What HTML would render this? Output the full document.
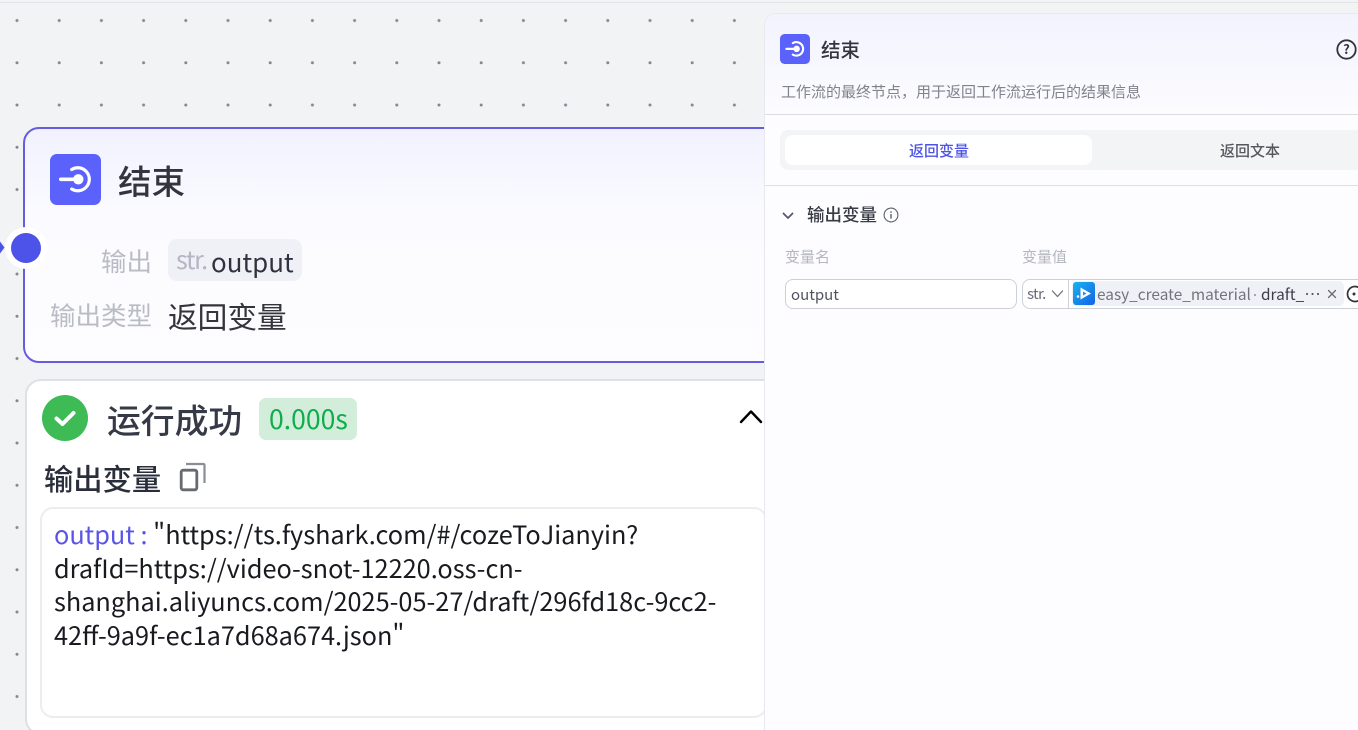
<!DOCTYPE html>
<html lang="zh">
<head>
<meta charset="utf-8">
<style>
html,body{margin:0;padding:0;width:1358px;height:730px;overflow:hidden;background:#f2f3f5;}
body{font-family:"Noto Sans CJK SC","Liberation Sans",sans-serif;position:relative;color:#30333d;}
.a{position:absolute;white-space:nowrap;}
#topline{left:0;top:2px;width:1358px;height:1px;background:#e3e4e8;}
#node{left:23px;top:127px;width:760px;height:232px;border:2px solid #665ce0;border-radius:16px;background:linear-gradient(180deg,#f1f2fe 0,#fbfbff 90px,#fdfdff 100%);}
#result{left:25px;top:379px;width:760px;height:352px;border:2px solid #dfe0e5;border-radius:16px;background:#fff;}
#box{left:40px;top:507px;width:723px;height:207px;border:2px solid #ecedf0;border-radius:13px;background:#fff;}
#panel{left:764px;top:13px;width:620px;height:730px;border:1px solid #e8e9ee;border-radius:12px 0 0 0;background:#fdfdff;box-sizing:border-box;}
#phead{left:765px;top:14px;width:593px;height:100px;background:linear-gradient(180deg,#f2f3fd 0,#fcfcff 100%);border-radius:12px 0 0 0;border-bottom:1px solid #dcdde1;}
</style>
</head>
<body>
<div class="a" id="topline"></div>
<svg class="a" style="left:0;top:0" width="765" height="730"><defs><pattern id="dp" x="-4.100" y="-0.600" width="42.200" height="42.250" patternUnits="userSpaceOnUse"><circle cx="21.100" cy="21.100" r="1.500" fill="#85878f"/></pattern></defs><rect width="765" height="730" fill="url(#dp)"/></svg>

<div class="a" id="node"></div>
<svg class="a" style="left:50px;top:154px" width="51" height="51" viewBox="0 0 51 51"><rect width="51" height="51" rx="7" fill="#5a62fb"/><path d="M21.700 15.500A11.500 11.500 0 1 1 21.700 35" fill="none" stroke="#fff" stroke-width="3.200" stroke-linecap="round"/><rect x="9" y="23.500" width="17" height="3.600" rx="1.800" fill="#fff"/><circle cx="28.300" cy="25.300" r="5.200" fill="#fff"/></svg>
<div class="a" style="left:118px;top:157px;font-size:33.500px;line-height:46px;font-weight:500;color:#33343c;">结束</div>
<div class="a" style="left:101px;top:243px;font-size:25.500px;line-height:36px;color:#b9bbc5;">输出</div>
<div class="a" style="left:168px;top:239px;width:134px;height:42px;border-radius:9px;background:#f0f1f6;"></div>
<div class="a" style="left:176px;top:241px;font-size:25px;line-height:36px;color:#b3b6c4;letter-spacing:-1.200px;">str.</div>
<div class="a" style="left:211px;top:243px;font-size:25.900px;line-height:38px;color:#30333f;">output</div>
<div class="a" style="left:50px;top:297px;font-size:25.500px;line-height:36px;color:#b9bbc5;">输出类型</div>
<div class="a" style="left:168px;top:296px;font-size:29.700px;line-height:40px;color:#33343c;">返回变量</div>
<div class="a" style="left:5px;top:227px;width:42px;height:42px;border-radius:50%;background:#fff;"></div>
<div class="a" style="left:11px;top:233px;width:30px;height:30px;border-radius:50%;background:#4d53e8;"></div>
<svg class="a" style="left:0;top:240px" width="5" height="15"><path d="M0 1.500 4.500 7.500 0 13.500Z" fill="#4d53e8"/></svg>

<div class="a" id="result"></div>
<svg class="a" style="left:42px;top:395px" width="46" height="46" viewBox="0 0 46 46"><circle cx="23" cy="23" r="23" fill="#3ebb55"/><path d="M14.500 23.500l6 5.500L31.500 18" fill="none" stroke="#fff" stroke-width="4" stroke-linecap="round" stroke-linejoin="round"/></svg>
<div class="a" style="left:107px;top:396px;font-size:33.800px;line-height:46px;font-weight:500;color:#363a47;">运行成功</div>
<div class="a" style="left:259px;top:398px;width:98px;height:42px;border-radius:7px;background:#d2eedb;"></div>
<div class="a" style="left:269px;top:400px;font-size:26.600px;line-height:36px;color:#10ad4c;">0.000s</div>
<svg class="a" style="left:738px;top:408px" width="26" height="16" viewBox="0 0 26 16"><path d="M3 14 13 3.500 23 14" fill="none" stroke="#000" stroke-width="2.400" stroke-linecap="round" stroke-linejoin="round"/></svg>
<div class="a" style="left:44px;top:458px;font-size:29.300px;line-height:40px;font-weight:500;color:#2a2e3b;">输出变量</div>
<svg class="a" style="left:179px;top:462px" width="27" height="30" viewBox="0 0 27 30"><rect x="2.200" y="8.200" width="15.600" height="19.600" rx="2" fill="none" stroke="#676a70" stroke-width="2.800"/><path d="M7 2h17.500a1 1 0 0 1 1 1v18" fill="none" stroke="#8b8d92" stroke-width="2.200"/></svg>
<div class="a" id="box"></div>
<div class="a" style="left:54px;top:518px;font-size:25.300px;line-height:33.700px;color:#181a20;white-space:pre;"><span style="color:#5a55e6">output : </span>"https://ts.fyshark.com/#/cozeToJianyin?
drafId=https://video-snot-12220.oss-cn-
shanghai.aliyuncs.com/2025-05-27/draft/296fd18c-9cc2-
42ff-9a9f-ec1a7d68a674.json"</div>

<div class="a" id="panel"></div>
<div class="a" id="phead"></div>
<svg class="a" style="left:780px;top:34px" width="30" height="30" viewBox="0 0 51 51"><rect width="51" height="51" rx="8" fill="#5a62fb"/><path d="M21.700 15.500A11.500 11.500 0 1 1 21.700 35" fill="none" stroke="#fff" stroke-width="3.600" stroke-linecap="round"/><rect x="9" y="23.300" width="17" height="4" rx="2" fill="#fff"/><circle cx="28.300" cy="25.300" r="5.500" fill="#fff"/></svg>
<div class="a" style="left:821px;top:35px;font-size:19.500px;line-height:28px;font-weight:500;color:#33343c;">结束</div>
<svg class="a" style="left:1336px;top:39px" width="21" height="21" viewBox="0 0 21 21"><circle cx="10.500" cy="10.500" r="9.200" fill="none" stroke="#30333c" stroke-width="1.800"/><text x="10.500" y="15" font-size="13" font-weight="700" text-anchor="middle" fill="#30333c" font-family="Noto Sans CJK SC,sans-serif">?</text></svg>
<div class="a" style="left:781px;top:82px;font-size:15px;line-height:20px;color:#80838c;">工作流的最终节点，用于返回工作流运行后的结果信息</div>

<div class="a" style="left:780px;top:130px;width:578px;height:40px;border-radius:8px 0 0 8px;background:#f3f4f6;"></div>
<div class="a" style="left:785px;top:135px;width:307px;height:30px;border-radius:8px;background:#fff;"></div>
<div class="a" style="left:909px;top:141px;font-size:15px;line-height:20px;font-weight:500;color:#4d53e8;">返回变量</div>
<div class="a" style="left:1220px;top:141px;font-size:15px;line-height:20px;font-weight:500;color:#55575e;">返回文本</div>
<div class="a" style="left:765px;top:185px;width:593px;height:1px;background:#dfe0e4;"></div>

<svg class="a" style="left:781px;top:210px" width="14" height="12" viewBox="0 0 14 12"><path d="M2.500 3.500 7 8 11.500 3.500" fill="none" stroke="#555a6a" stroke-width="1.800" stroke-linecap="round" stroke-linejoin="round"/></svg>
<div class="a" style="left:807px;top:204px;font-size:17.500px;line-height:22px;font-weight:500;color:#383b45;">输出变量</div>
<svg class="a" style="left:883px;top:207px" width="16" height="16" viewBox="0 0 16 16"><circle cx="8" cy="8" r="6.900" fill="none" stroke="#5c5f69" stroke-width="1.100"/><rect x="7.300" y="7" width="1.400" height="4.600" fill="#5c5f69"/><rect x="7.300" y="4.300" width="1.400" height="1.500" fill="#5c5f69"/></svg>
<div class="a" style="left:785px;top:247px;font-size:15px;line-height:20px;color:#b5b7bf;">变量名</div>
<div class="a" style="left:1022px;top:247px;font-size:15px;line-height:20px;color:#b5b7bf;">变量值</div>

<div class="a" style="left:785px;top:279px;width:232px;height:30px;box-sizing:border-box;border:1px solid #ced0d8;border-radius:8px;background:#fff;"></div>
<div class="a" style="left:791px;top:284px;font-size:15px;line-height:21px;color:#50535e;">output</div>
<div class="a" style="left:1022px;top:279px;width:360px;height:30px;box-sizing:border-box;border:1px solid #ced0d8;border-radius:8px;background:#fff;"></div>
<div class="a" style="left:1068px;top:280px;width:1px;height:28px;background:#ced0d8;"></div>
<div class="a" style="left:1027px;top:283px;font-size:15px;line-height:21px;color:#6c6f7b;letter-spacing:-.700px;">str.</div>
<svg class="a" style="left:1051px;top:289px" width="13" height="10" viewBox="0 0 13 10"><path d="M1.500 2 6.500 7.500 11.500 2" fill="none" stroke="#6f727c" stroke-width="1.300" stroke-linecap="round" stroke-linejoin="round"/></svg>
<div class="a" style="left:1072px;top:281px;width:272px;height:25px;border-radius:5px;background:#f0f1f7;"></div>
<svg class="a" style="left:1073px;top:282px" width="22" height="23" viewBox="0 0 22 23"><defs><linearGradient id="g" x1="0" y1="0" x2="1" y2="1"><stop offset="0" stop-color="#19b4ee"/><stop offset="1" stop-color="#1462e8"/></linearGradient></defs><rect width="22" height="23" rx="3" fill="url(#g)"/><path d="M7.500 5.500 18 11.500 7.500 17.500Z" fill="#fff"/><path d="M10 9.500 13.500 11.500 10 13.500Z" fill="#2b88ec"/><circle cx="5" cy="14.500" r="1.300" fill="#fff"/></svg>
<div class="a" style="left:1097px;top:284px;font-size:15.400px;line-height:21px;color:#71747f;">easy_create_material</div>
<div class="a" style="left:1254px;top:294px;width:2px;height:2px;border-radius:50%;background:#8f919a;"></div>
<div class="a" style="left:1261px;top:284px;font-size:15.400px;line-height:21px;color:#3c3f4a;">draft_</div>
<div class="a" style="left:1306px;top:293px;width:14px;height:2px;background:radial-gradient(circle at 1px 1px,#50535e 1px,transparent 1.100px) 0 0/5.500px 2px repeat-x;"></div>
<svg class="a" style="left:1327px;top:289px" width="10" height="10" viewBox="0 0 10 10"><path d="M1.500 1.500 8.500 8.500M8.500 1.500 1.500 8.500" stroke="#676a74" stroke-width="1.300" stroke-linecap="round"/></svg>
<svg class="a" style="left:1346px;top:285px" width="18" height="18" viewBox="0 0 18 18"><path d="M3 4.500A7.500 7.500 0 1 1 1.500 9 7.500 7.500 0 0 1 3 4.500Z" fill="none" stroke="#30333c" stroke-width="1.700"/><circle cx="8" cy="9" r="1.500" fill="#30333c"/></svg>
</body>
</html>
